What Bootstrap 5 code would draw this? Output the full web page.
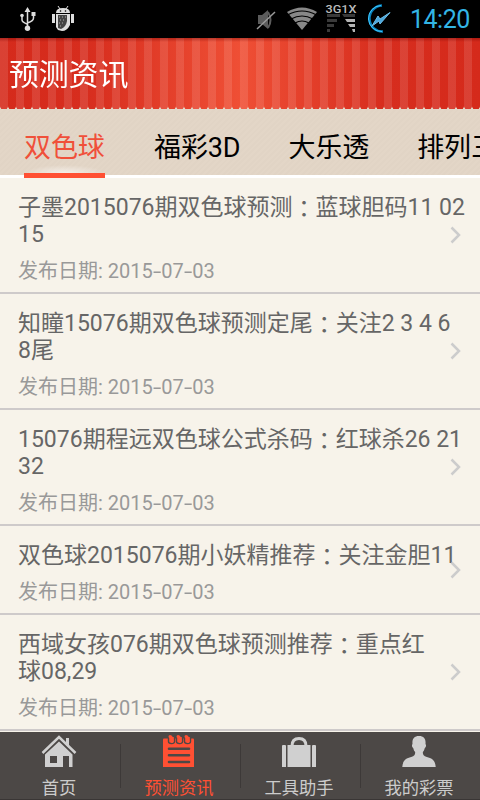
<!DOCTYPE html>
<html lang="zh-CN">
<head>
<meta charset="utf-8">
<meta name="viewport" content="width=device-width, initial-scale=1">
<title>预测资讯</title>
<link href="https://cdn.jsdelivr.net/npm/bootstrap@5.3.0/dist/css/bootstrap.min.css" rel="stylesheet">
<style>
body{width:480px;height:800px;background:#f7f3ea;font-family:Roboto,"Noto Sans CJK SC",sans-serif;}
.status-bar{height:38px;background:#000;}
.status-bar svg{display:block;flex:none;}
.clock{color:#33b5e5;font-size:25px;line-height:40px;width:61px;letter-spacing:-.5px;}
.app-header{height:71px;flex:none;padding:2px 0 0 9px;color:#fff;font-size:30px;letter-spacing:-.2px;z-index:1;
 background:linear-gradient(rgba(110,0,0,.4),transparent 4px),repeating-linear-gradient(90deg,rgba(255,255,255,.11) 0 8px,transparent 8px 16px),linear-gradient(90deg,#d52a1b 0,#d72d1e 18%,#ef4f35 50%,#d72d1e 80%,#d52a1b 100%);
 -webkit-mask:linear-gradient(#000,#000) 0 0/100% 68px no-repeat,radial-gradient(circle at 4px 0,#000 3.5px,transparent 4.3px) 0 68px/8px 3px repeat-x;
 mask:linear-gradient(#000,#000) 0 0/100% 68px no-repeat,radial-gradient(circle at 4px 0,#000 3.5px,transparent 4.3px) 0 68px/8px 3px repeat-x;}
.tab-strip{height:73px;margin-top:-4px;padding-top:4px;flex:none;background:linear-gradient(#fff,#fff) 0 100%/100% 3px no-repeat,repeating-linear-gradient(135deg,#e3d6c7 0 2px,#e1d4c5 2px 4px);}
.tab-strip .tab-item{flex:none;margin:0 24px;padding-top:19px;height:69px;font-size:27px;line-height:40px;color:#000;text-decoration:none;white-space:nowrap;letter-spacing:-.1px;}
.tab-strip .tab-item.active{color:#f0503a;border-bottom:5px solid #ff5033;width:81px;margin-right:25px;background:radial-gradient(ellipse 40px 8px at 50% 100%,#f4eee8,transparent);}
.news-item{background:#f7f3ea;padding:16px 0 9px 18px;border-bottom:2px solid #cecaca;color:#666;}
.news-title{font-size:23px;line-height:27px;white-space:nowrap;}
.colon{font-family:"Noto Sans CJK TC",sans-serif;line-height:1;position:relative;top:2px;}
.news-date{font-size:20px;line-height:24px;color:#999;margin-top:11px;}
.dash{display:inline-block;width:8.500px;transform:scaleX(1.5);text-align:center;}
.chevron{right:19px;top:50%;transform:translateY(-50%);}
.bottom-nav{height:68px;background:#4c4846;border-bottom:1px solid #3a3635;}
.bottom-nav a{color:#ccc;text-decoration:none;font-size:17.3px;line-height:22px;padding-right:2px;}
.bottom-nav a.active{color:#ff5033;}
.bottom-nav a+a::before{content:"";position:absolute;left:0;top:12px;height:44px;border-left:1px solid #3d3938;}
.bottom-nav svg{display:block;margin:2px 0 10px;}
</style>
<script src="https://cdn.jsdelivr.net/npm/bootstrap@5.3.0/dist/js/bootstrap.bundle.min.js"></script>
</head>
<body class="d-flex flex-column overflow-hidden m-0">
<div class="status-bar d-flex align-items-start flex-shrink-0">
 <svg width="240" height="38" fill="none" stroke="#ddd">
  <path d="M27.500 12v15M22 17v3q0 2 5 4M33.500 16v2q0 3-6 5" stroke-width="1.500"/>
  <path d="M27.500 7l3 5h-6zM31.500 12h4v4h-4z" fill="#ddd" stroke="none"/><circle cx="22" cy="15.500" r="1.800" fill="#ddd" stroke="none"/><circle cx="27.500" cy="28.300" r="2.700" fill="#ddd" stroke="none"/>
  <path d="M56 13q0-5 7-5t7 5z" fill="#ddd" stroke="none"/><path d="M58 6l2 3M68 6l-2 3"/>
  <path d="M52 14h3v9h-3zM71 14h3v9h-3zM56 14h14v11q-3 6-8 6l-4-1-2-3z" fill="#ddd" stroke="none"/>
  <path d="M58 15h9v6q-1 6-6 8l-3-1z" fill="#444" stroke="none"/><path d="M59 17l7 0M60 20h5M59 23h6M60 26h3" stroke="#aaa" stroke-dasharray="1 2"/><circle cx="60.500" cy="11" r=".8" fill="#000" stroke="none"/><circle cx="65.500" cy="11" r=".8" fill="#000" stroke="none"/>
 </svg>
 <svg width="170" height="38" viewBox="240 0 170 38">
  <path d="M258 15h4l6-5v19l-6-5h-4z" fill="#5c5c5c"/><path d="M268 12q5 8 0 16" stroke="#5c5c5c" stroke-width="2" fill="none"/><path d="M257 29L275 12" stroke="#999" stroke-width="1.500"/>
  <path d="M302 30L287 12q15-9 30 0z" fill="#888"/><path d="M287.500 15q14.500-8 29 0M291 19q11-6 22 0M295 23q7-4 14 0" stroke="#000" stroke-width="1.200" fill="none"/>
  <text x="325.500" y="13" font-size="11.500" font-weight="500" fill="#bbb" font-family="Roboto" textLength="31" lengthAdjust="spacingAndGlyphs">3G1X</text>
  <path d="M327 14h13v3h-13zM327 19h10v3h-10zM327 24h7v3h-7zM327 29h3v3h-3zM342 14h13v3h-11z" fill="#3a3a3a"/><path d="M345 19h10v3h-8zM348 24h7v3h-5zM352 29h3v3h-2z" fill="#b5b5b5"/>
  <path d="M382 5.500a13 13 0 1 0 1 26" fill="none" stroke="#087eb8" stroke-width="2.500"/><path d="M381 5.500A13 13 0 1 0 382 31.500" fill="none" stroke="#40c8ff"/>
  <path d="M390 12.500L380 24l-1-3-7 5 6-10 2 3z" fill="#4ba7dc" stroke="#6dbce6"/>
 </svg>
 <span class="clock">14:20</span>
</div>
<header class="app-header d-flex align-items-center position-relative">预测资讯</header>
<nav class="tab-strip d-flex overflow-hidden">
 <a class="tab-item active" href="#">双色球</a><a class="tab-item" href="#">福彩3D</a><a class="tab-item" href="#">大乐透</a><a class="tab-item" href="#">排列三</a>
</nav>
<main class="flex-grow-1 overflow-hidden">
 <article class="news-item position-relative"><div class="news-title">子墨2015076期双色球预测<span class="colon" lang="zh-TW">：</span>蓝球胆码11 02<br>15</div><div class="news-date">发布日期: 2015<span class="dash">-</span>07<span class="dash">-</span>03</div><svg class="chevron position-absolute" width="11" height="18" fill="none" stroke="#ccc" stroke-width="2.500"><path d="M1.500 1.500L9 9l-7.500 7.500"/></svg></article>
 <article class="news-item position-relative"><div class="news-title">知瞳15076期双色球预测定尾<span class="colon" lang="zh-TW">：</span>关注2 3 4 6<br>8尾</div><div class="news-date">发布日期: 2015<span class="dash">-</span>07<span class="dash">-</span>03</div><svg class="chevron position-absolute" width="11" height="18" fill="none" stroke="#ccc" stroke-width="2.500"><path d="M1.500 1.500L9 9l-7.500 7.500"/></svg></article>
 <article class="news-item position-relative"><div class="news-title">15076期程远双色球公式杀码<span class="colon" lang="zh-TW">：</span>红球杀26 21<br>32</div><div class="news-date">发布日期: 2015<span class="dash">-</span>07<span class="dash">-</span>03</div><svg class="chevron position-absolute" width="11" height="18" fill="none" stroke="#ccc" stroke-width="2.500"><path d="M1.500 1.500L9 9l-7.500 7.500"/></svg></article>
 <article class="news-item position-relative"><div class="news-title">双色球2015076期小妖精推荐<span class="colon" lang="zh-TW">：</span>关注金胆11</div><div class="news-date">发布日期: 2015<span class="dash">-</span>07<span class="dash">-</span>03</div><svg class="chevron position-absolute" width="11" height="18" fill="none" stroke="#ccc" stroke-width="2.500"><path d="M1.500 1.500L9 9l-7.500 7.500"/></svg></article>
 <article class="news-item position-relative"><div class="news-title">西域女孩076期双色球预测推荐<span class="colon" lang="zh-TW">：</span>重点红<br>球08,29</div><div class="news-date">发布日期: 2015<span class="dash">-</span>07<span class="dash">-</span>03</div><svg class="chevron position-absolute" width="11" height="18" fill="none" stroke="#ccc" stroke-width="2.500"><path d="M1.500 1.500L9 9l-7.500 7.500"/></svg></article>
</main>
<nav class="bottom-nav d-flex flex-shrink-0">
 <a class="col-3 d-flex flex-column align-items-center position-relative" href="#"><svg width="36" height="36" fill="#d0d0d0"><path d="M1.500 19L18 3l16.500 16" fill="none" stroke="#d0d0d0" stroke-width="2.500"/><path d="M25 4h3v10l-3-3zM18 7.500l13.500 13V35H28V22h-6v13H4V20.500zM9 22v7h7v-7z" fill-rule="evenodd"/></svg>首页</a>
 <a class="active col-3 d-flex flex-column align-items-center position-relative" href="#"><svg width="36" height="36"><rect x="2" y="4.500" width="31" height="30" rx="1" fill="#ff5033"/><path d="M7.500 3v4.500q0 2 3 2t3-2V3M15.500 3v4.500q0 2 3 2t3-2V3M23.500 3v4.500q0 2 3 2t3-2V3" stroke="#4c4846" stroke-width="1.400" fill="#ff5033"/><path d="M9 2.500q2 0 2 5M17 2.500q2 0 2 5M25 2.500q2 0 2 5" stroke="#ff5033" stroke-width="3" stroke-linecap="round" fill="none"/><path d="M8 14.700h20M8 21.300h20M8 28h20" stroke="#4c4846" stroke-width="2.600" stroke-linecap="round"/></svg>预测资讯</a>
 <a class="col-3 d-flex flex-column align-items-center position-relative" href="#"><svg width="36" height="36" fill="#d0d0d0"><rect x="1" y="11" width="4" height="23" rx="1"/><rect x="6.500" y="11" width="23" height="23"/><rect x="31" y="11" width="4" height="23" rx="1"/><path d="M11 12q0-7.500 7-7.500t7 7.500" fill="none" stroke="#d0d0d0" stroke-width="3"/></svg>工具助手</a>
 <a class="col-3 d-flex flex-column align-items-center position-relative" href="#"><svg width="36" height="36" fill="#d0d0d0"><path d="M18 2c5 0 7 3 6.500 8 1 1 .5 3-.7 4-.5 2-1 3-2 4 0 3 1 4 4 5 6 1.500 9 4 9 12H1.200c0-8 3-10.500 9-12 3-1 4-2 4-5-1-1-1.500-2-2-4-1.200-1-1.700-3-.7-4C11 5 13 2 18 2z"/></svg>我的彩票</a>
</nav>
</body>
</html>
